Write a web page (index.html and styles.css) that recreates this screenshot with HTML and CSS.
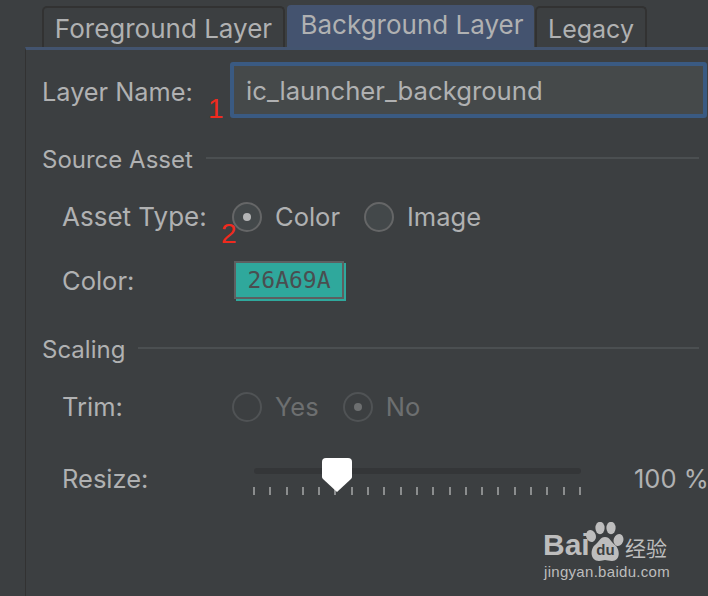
FILE: index.html
```html
<!DOCTYPE html>
<html lang="en">
<head>
<meta charset="utf-8">
<title>Background Layer</title>
<link rel="stylesheet" href="styles.css">
</head>
<body>
<div class="screen">
  <div class="tabs">
    <div class="tab tab-fg">Foreground Layer</div>
    <div class="tab tab-active">Background Layer</div>
    <div class="tab tab-legacy">Legacy</div>
  </div>
  <div class="panel">
    <div class="name-row">
      <span class="label">Layer Name:</span>
      <div class="input">ic_launcher_background</div>
    </div>
    <div class="section-head source-head"><span class="head-text">Source Asset</span><i class="rule"></i></div>
    <div class="row type-row">
      <span class="label col">Asset Type:</span>
      <span class="radio on"></span><span class="opt">Color</span>
      <span class="radio"></span><span class="opt">Image</span>
    </div>
    <div class="row color-row">
      <span class="label col">Color:</span>
      <div class="swatch">26A69A</div>
    </div>
    <div class="section-head scaling-head"><span class="head-text">Scaling</span><i class="rule"></i></div>
    <div class="row trim-row disabled">
      <span class="label col">Trim:</span>
      <span class="radio"></span><span class="opt">Yes</span>
      <span class="radio on"></span><span class="opt">No</span>
    </div>
    <div class="row resize-row">
      <span class="label col">Resize:</span>
      <div class="slider">
        <div class="track"></div>
        <div class="ticks">
          <i></i><i></i><i></i><i></i><i></i><i></i><i></i><i></i><i></i><i></i><i></i><i></i><i></i><i></i><i></i><i></i><i></i><i></i><i></i><i></i><i></i>
        </div>
        <svg class="thumb" width="30" height="34" viewBox="0 0 30 34"><path d="M4 0H26Q30 0 30 4V19Q30 20 29 21L15 34L1 21Q0 20 0 19V4Q0 0 4 0Z" fill="#fff"/></svg>
      </div>
      <span class="value">100 %</span>
    </div>
  </div>
  <span class="mark mark-1">1</span>
  <span class="mark mark-2">2</span>
  <div class="wm">
    <div class="wm-top">
      <span class="wm-bai">Bai</span>
      <svg class="wm-paw" width="38" height="40" viewBox="0 0 38 40"><g fill="#bdbdbd"><ellipse cx="5" cy="14" rx="4.8" ry="6" transform="rotate(-20 5 14)"/><ellipse cx="14" cy="6" rx="4.6" ry="6.2"/><ellipse cx="25" cy="6" rx="4.6" ry="6.2"/><ellipse cx="32.5" cy="18" rx="4.8" ry="6" transform="rotate(20 32.5 18)"/><path d="M19 15C14 15 13 20 9 23C4 27 4 39 13 39C16 39 17 38 19 38C21 38 23 39 26 39C35 39 34 27 29 23C25 20 24 15 19 15Z"/></g><text x="19.5" y="33" text-anchor="middle" class="wm-du">du</text></svg>
      <span class="wm-cn">经验</span>
    </div>
    <div class="wm-url">jingyan.baidu.com</div>
  </div>
</div>
</body>
</html>
```
FILE: styles.css
```css
* { box-sizing: border-box; }
html, body { margin: 0; padding: 0; }
body { background: #3c3f41; }
.screen {
  position: relative;
  width: 708px;
  height: 596px;
  overflow: hidden;
  background: #3c3f41;
  font-family: "Inter", "Liberation Sans", sans-serif;
  font-size: 25.5px;
  color: #b0b1b2;
  padding: 5px 0 0 25px;
}
.tabs { display: flex; align-items: flex-end; height: 42px; padding-left: 17px; font-size: 26px; }
.tab { display: flex; justify-content: center; align-items: center; }
.tab-fg, .tab-legacy {
  height: 41px;
  border: 2px solid #323232;
  border-bottom: 0;
  border-radius: 5px 5px 0 0;
  background: #3c3f41;
  padding-top: 2px;
}
.tab-fg { width: 243px; }
.tab-legacy { width: 112px; margin-left: 1px; font-size: 25px; padding-top: 3px; }
.tab-active {
  width: 247px;
  height: 42px;
  margin-left: 2px;
  background: #44536f;
  border-radius: 4px 4px 0 0;
  padding: 0 0 4px 3px;
}
.panel {
  height: 560px;
  border-top: 3px solid #43546f;
  border-left: 1px solid #323232;
}
.name-row { display: flex; align-items: center; height: 56px; margin-top: 12px; padding-left: 16px; }
.name-row .label { width: 188px; font-size: 25.3px; padding-top: 2px; }
.input {
  width: 477px;
  height: 56px;
  border: 4px solid #3a5a82;
  border-radius: 3px;
  background: #45494a;
  padding-left: 12px;
  line-height: 50px;
  font-size: 25.7px;
}
.section-head { display: flex; align-items: center; gap: 13px; height: 30px; padding-left: 16px; font-size: 24px; }
.head-text { padding-bottom: 2px; }
.section-head .rule { flex: 1; height: 2px; background: #4b4f51; margin: 0 9px 4px 0; }
.source-head { margin-top: 27px; }
.scaling-head { margin-top: 35px; }
.row { display: flex; align-items: center; padding-left: 36px; }
.col { width: 170px; }
.type-row { margin-top: 27px; height: 30px; }
.type-row .col { font-size: 26px; padding-bottom: 2px; }
.trim-row .col, .resize-row .col, .opt, .value { padding-bottom: 2px; }
.radio {
  flex: none;
  position: relative;
  width: 30px;
  height: 30px;
  border: 2px solid #656667;
  border-radius: 50%;
  background: #43484a;
}
.radio.on::after {
  content: "";
  position: absolute;
  left: 9px;
  top: 9px;
  width: 8px;
  height: 8px;
  border-radius: 50%;
  background: #b4b5b6;
}
.opt { margin-left: 13px; margin-right: 24px; }
.color-row { margin-top: 28px; height: 40px; }
.swatch {
  width: 110px;
  height: 38px;
  margin-left: 2px;
  background: #2fa89c;
  border: 2px solid #5d5f60;
  box-shadow: 2px 2px 0 #2fa89c;
  color: #4a4e50;
  font-family: "DejaVu Sans Mono", monospace;
  font-size: 23px;
  display: flex;
  align-items: center;
  justify-content: center;
}
.trim-row { margin-top: 27px; height: 30px; }
.disabled .opt { color: #6d6f70; }
.disabled .radio { border-color: #505355; background: transparent; }
.disabled .radio.on::after { background: #6d6f70; }
.resize-row { margin-top: 27px; height: 60px; }
.resize-row .col { width: 191px; flex: none; }
.slider { position: relative; flex: none; width: 328px; height: 60px; margin-right: 53px; }
.track {
  position: absolute;
  left: 1px; right: 0; top: 19px;
  height: 6px;
  border-radius: 3px;
  background: #343638;
}
.ticks { position: absolute; left: 0; right: 0; top: 38px; display: flex; justify-content: space-between; }
.ticks i { width: 2px; height: 8px; background: #8b8d8e; }
.thumb { position: absolute; left: 69px; top: 9px; }
.value { white-space: nowrap; font-size: 25.5px; }
.mark { position: absolute; color: #f02a1e; font-family: "Liberation Sans", sans-serif; font-size: 28px; line-height: 1; }
.mark-1 { left: 208px; top: 95px; }
.mark-2 { left: 221px; top: 220px; }
.wm { position: absolute; left: 543px; top: 522px; width: 130px; color: #bdbdbd; }
.wm-top { display: flex; align-items: flex-end; height: 40px; }
.wm-bai { font-family: "Liberation Sans", sans-serif; font-weight: 700; font-size: 30px; line-height: 34px; width: 43px; flex: none; white-space: nowrap; }
.wm-paw { flex: none; }
.wm-du { fill: #3c3f41; font-family: "Liberation Sans", sans-serif; font-size: 15px; font-weight: 700; }
.wm-cn { font-family: "Noto Sans CJK SC", sans-serif; font-size: 21px; line-height: 30px; margin-left: 1px; white-space: nowrap; }
.wm-url { font-family: "Liberation Sans", sans-serif; font-size: 15px; letter-spacing: 0.3px; line-height: 16px; margin: 2px 0 0 1px; white-space: nowrap; }
```
